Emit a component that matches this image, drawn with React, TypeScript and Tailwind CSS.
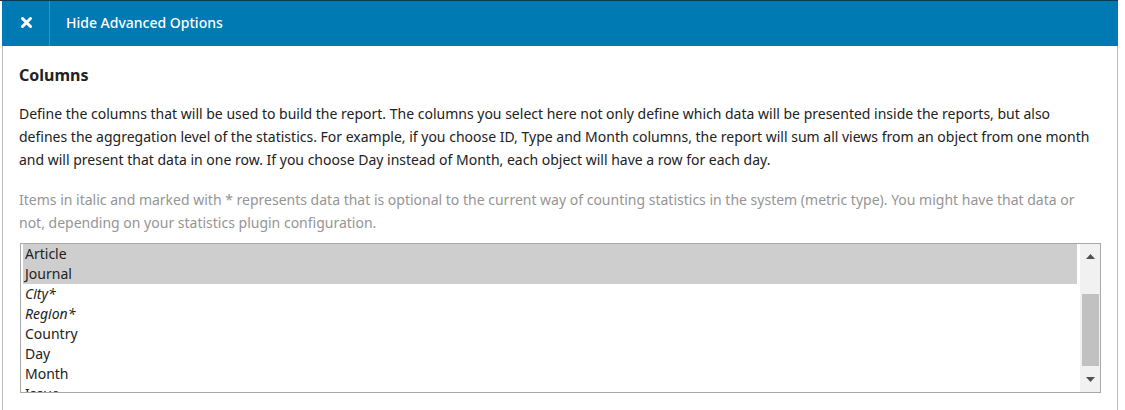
import React from 'react'

const options = [
  { label: 'Article', selected: true },
  { label: 'Journal', selected: true },
  { label: 'City*', italic: true },
  { label: 'Region*', italic: true },
  { label: 'Country' },
  { label: 'Day' },
  { label: 'Month' },
  { label: 'Issue' },
]

export default function App() {
  return (
    <div className="w-[1125px] h-[410px] bg-white overflow-hidden font-['Noto_Sans',sans-serif] text-[#222]">
      <div className="h-px w-[1118px] bg-[#0b3b52]" />
      <div className="ml-[2px] w-[1116px] h-[45px] bg-[#007ab2] flex items-stretch text-white">
        <div className="w-[48px] border-r border-[#3593c0] flex items-center justify-center pb-[2px]">
          <svg width="11" height="11" viewBox="0 0 11 11" className="ml-[2px]">
            <path d="M1.5 1.5 L9.5 9.5 M9.5 1.5 L1.5 9.5" stroke="white" strokeWidth="3" strokeLinecap="round" />
          </svg>
        </div>
        <div className="flex items-center pl-[16px] pb-[3px] text-[14px] font-medium">Hide Advanced Options</div>
      </div>
      <div className="ml-[2px] w-[1116px] h-[364px] border-l border-r border-[#bbbbbb] pl-[16px] pr-[16px] pt-[17px]">
        <h3 className="text-[16px] font-bold leading-[24px]">Columns</h3>
        <p className="mt-[15px] text-[14px] leading-[23px]">
          Define the columns that will be used to build the report. The columns you select here not only define which data will be presented inside the reports, but also defines the aggregation level of the statistics. For example, if you choose ID, Type and Month columns, the report will sum all views from an object from one month and will present that data in one row. If you choose Day instead of Month, each object will have a row for each day.
        </p>
        <p className="mt-[17px] text-[14px] leading-[23px] text-[#959595]">
          Items in italic and marked with * represents data that is optional to the current way of counting statistics in the system (metric type). You might have that data or not, depending on your statistics plugin configuration.
        </p>
        <div className="mt-[9px] ml-[1px] w-[1081px] h-[150px] border border-[#a9a9a9] flex">
          <div className="flex-1 overflow-hidden pl-[2px] pr-[3px]">
            {options.map((o) => (
              <div
                key={o.label}
                className={`h-[20px] leading-[20px] pl-[2px] text-[14px] ${o.selected ? 'bg-[#cecece]' : ''} ${o.italic ? 'italic' : ''}`}
              >
                {o.label}
              </div>
            ))}
          </div>
          <div className="w-[20px] bg-[#f1f1f1] flex flex-col items-center">
            <div className="h-[24px] flex items-center justify-center">
              <svg width="9" height="5" viewBox="0 0 9 5"><path d="M4.5 0 L9 5 L0 5 Z" fill="#505050" /></svg>
            </div>
            <div className="h-[26px]" />
            <div className="w-[17px] h-[72px] bg-[#c1c1c1]" />
            <div className="flex-1 flex items-center justify-center">
              <svg width="9" height="5" viewBox="0 0 9 5"><path d="M0 0 L9 0 L4.5 5 Z" fill="#505050" /></svg>
            </div>
          </div>
        </div>
      </div>
    </div>
  )
}
